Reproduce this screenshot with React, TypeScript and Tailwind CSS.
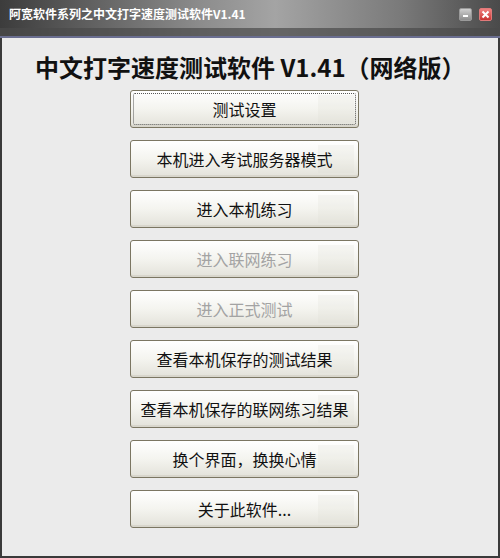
const items = [
  { label: "测试设置", focus: true },
  { label: "本机进入考试服务器模式" },
  { label: "进入本机练习" },
  { label: "进入联网练习", disabled: true },
  { label: "进入正式测试", disabled: true },
  { label: "查看本机保存的测试结果" },
  { label: "查看本机保存的联网练习结果" },
  { label: "换个界面，换换心情" },
  { label: "关于此软件..." },
];

function WinButton({ label, disabled, focus }: { label: string; disabled?: boolean; focus?: boolean }) {
  return (
    <button
      className={
        "relative h-[38px] w-[229px] rounded-[3px] border border-[#7b7662] bg-gradient-to-b from-[#ffffff] via-[#f4f4ef] to-[#e3e2da] text-[16px] shadow-[inset_0_-2px_0_#d8d6cc] " +
        (disabled ? "text-[#a3a3a3]" : "text-[#111]")
      }
    >
      {focus && (
        <span className="absolute inset-[2px] rounded-[2px] border border-dotted border-[#555]" />
      )}
      <span className="absolute top-[4px] bottom-[4px] right-[4px] w-[36px] bg-[#dcdcd4]/20" />
      <span className="relative">{label}</span>
    </button>
  );
}

export default function App() {
  return (
    <div
      className="flex h-[558px] w-[500px] flex-col bg-[#3a3a3a]"
      style={{ fontFamily: '"Noto Sans CJK SC", "Liberation Sans", sans-serif' }}
    >
      <div className="relative h-[38px] shrink-0 bg-[linear-gradient(90deg,#3c3c3c_0%,#8c8c8c_40%,#a4a4a4_55%,#7a7a7a_80%,#4a4a4a_100%)]">
        <div className="absolute inset-x-0 bottom-0 h-[10px] bg-[#4a4a4a]/70" />
        <div className="absolute inset-x-0 bottom-0 h-[2px] bg-[#6a6e90]" />
        <div className="relative flex h-[28px] items-center justify-between pl-[9px] pr-[8px]">
          <span className="text-[12px] font-bold leading-none text-white">
            阿宽软件系列之中文打字速度测试软件V1.41
          </span>
          <div className="flex gap-[7px]">
            <span className="flex h-[13px] w-[13px] items-end justify-center rounded-[2px] border border-[#9a9a9a] bg-gradient-to-b from-[#cfcfcf] to-[#8d8d8d] pb-[3px]">
              <span className="h-[2px] w-[5px] bg-white" />
            </span>
            <span className="flex h-[13px] w-[13px] items-center justify-center rounded-[2px] border border-[#e07a7a] bg-gradient-to-b from-[#f08080] to-[#c83030]">
              <svg width="9" height="9" viewBox="0 0 9 9">
                <path d="M1.5 1.5 L7.5 7.5 M7.5 1.5 L1.5 7.5" stroke="white" strokeWidth="2" />
              </svg>
            </span>
          </div>
        </div>
      </div>
      <div className="mx-[2px] mb-[2px] flex flex-1 flex-col bg-[#ebebeb]">
        <h1 className="mt-[15px] pl-[33px] text-[24px] font-bold leading-[28px] text-[#111]">
          中文打字速度测试软件 V1.41（网络版）
        </h1>
        <div className="mt-[9px] flex flex-col gap-[12px] pl-[128px]">
          {items.map((it) => (
            <WinButton key={it.label} {...it} />
          ))}
        </div>
      </div>
    </div>
  );
}
